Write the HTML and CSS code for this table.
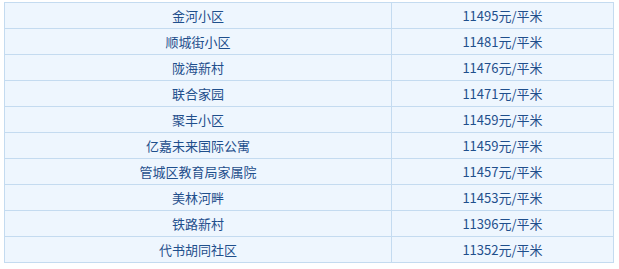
FILE: index.html
```html
<!DOCTYPE html>
<html lang="zh">
<head>
<meta charset="utf-8">
<link rel="stylesheet" href="styles.css">
</head>
<body>
<table class="price-table">
  <colgroup><col class="col-name"><col class="col-price"></colgroup>
  <tbody>
    <tr><td>金河小区</td><td>11495元/平米</td></tr>
    <tr><td>顺城街小区</td><td>11481元/平米</td></tr>
    <tr><td>陇海新村</td><td>11476元/平米</td></tr>
    <tr><td>联合家园</td><td>11471元/平米</td></tr>
    <tr><td>聚丰小区</td><td>11459元/平米</td></tr>
    <tr><td>亿嘉未来国际公寓</td><td>11459元/平米</td></tr>
    <tr><td>管城区教育局家属院</td><td>11457元/平米</td></tr>
    <tr><td>美林河畔</td><td>11453元/平米</td></tr>
    <tr><td>铁路新村</td><td>11396元/平米</td></tr>
    <tr><td>代书胡同社区</td><td>11352元/平米</td></tr>
  </tbody>
</table>
</body>
</html>
```
FILE: styles.css
```css
html, body {
  margin: 0;
  padding: 0;
  background: #ffffff;
}
body {
  padding: 2px 0 0 4px;
  font-family: "Noto Sans CJK SC", "Noto Sans", sans-serif;
  font-size: 13px;
  color: #1f4f8c;
}
.price-table {
  border-collapse: collapse;
  width: 609px;
  table-layout: fixed;
  background: #eef6fe;
}
.col-name { width: 387px; }
.col-price { width: 222px; }
.price-table td {
  border: 1px solid #c4dbf0;
  height: 25px;
  padding: 0;
  text-align: center;
  vertical-align: middle;
  line-height: 25px;
}
```
